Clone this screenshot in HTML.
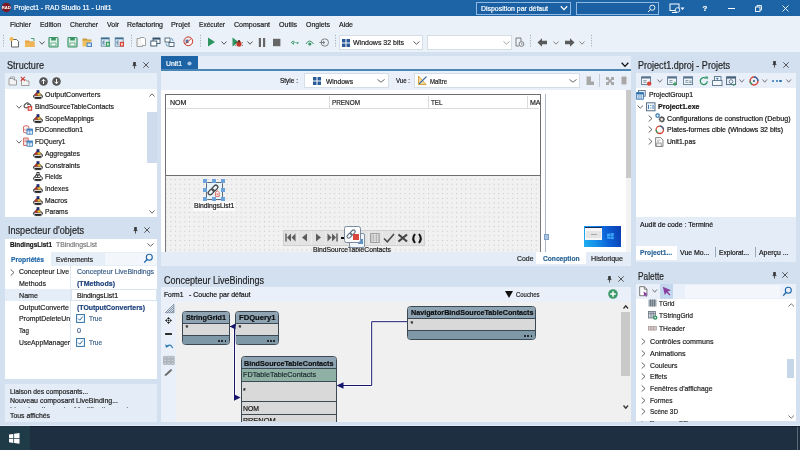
<!DOCTYPE html>
<html><head><meta charset="utf-8"><title>RAD Studio</title><style>
html,body{margin:0;padding:0;}
body{width:800px;height:450px;overflow:hidden;position:relative;background:#d3e0f0;font-family:"Liberation Sans",sans-serif;}
#root{position:absolute;left:0;top:0;width:800px;height:450px;overflow:hidden;will-change:transform;}
#root div,#root span.t,#root svg{position:absolute;}
#root span.t{white-space:nowrap;-webkit-text-stroke:0.2px currentColor;}
#root svg{overflow:visible;}
#root svg.flip{transform:scaleY(-1);}
#root svg.clip{overflow:hidden;}
</style></head><body><div id="root">
<div style="left:0px;top:0px;width:800px;height:16px;background:#1c64a6;"></div>
<svg style="left:1px;top:2.4px" width="11" height="11" viewBox="0 0 11 11"><circle cx="5.3" cy="5.5" r="4.7" fill="#7d1a22"/><text x="5.3" y="7.1" font-size="4.2" font-weight="bold" fill="#fff" text-anchor="middle" font-family="Liberation Sans">RAD</text></svg>
<span class="t" style="left:14px;top:2.00px;font-size:8px;line-height:12px;color:#fff;transform:scaleX(0.8511);transform-origin:0 50%;">Project1 - RAD Studio 11 - Unit1</span>
<div style="left:476px;top:2px;width:95px;height:12.5px;background:#1b60a2;border:1px solid #8fb9e2;box-sizing:border-box;"></div>
<span class="t" style="left:481px;top:3.00px;font-size:8px;line-height:12px;color:#fff;transform:scaleX(0.8659);transform-origin:0 50%;">Disposition par défaut</span>
<svg style="left:560px;top:5.3px" width="8" height="6" viewBox="0 0 8 6"><path d="M0.8 1.2 L4 4.6 L7.2 1.2" stroke="#fff" stroke-width="1.3" fill="none"/></svg>
<div style="left:576px;top:2px;width:83px;height:12.5px;background:#1b60a2;border:1px solid #8fb9e2;box-sizing:border-box;"></div>
<svg style="left:647px;top:4px" width="9" height="9" viewBox="0 0 9 9"><circle cx="5.3" cy="3.7" r="2.6" stroke="#fff" stroke-width="0.9" fill="none"/><path d="M3.4 5.6 L1 8" stroke="#fff" stroke-width="1"/></svg>
<svg style="left:669px;top:3px" width="16" height="11" viewBox="0 0 16 11"><rect x="1" y="1" width="9" height="6.5" fill="none" stroke="#fff" stroke-width="1"/><path d="M3 9.5h5" stroke="#fff"/><circle cx="8.5" cy="7" r="2.3" fill="#1c64a6" stroke="#fff" stroke-width="0.8"/><path d="M11.5 4.5h4l-2 2.5z" fill="#fff"/></svg>
<span class="t" style="left:702.5px;top:3.00px;font-size:8px;line-height:12px;color:#fff;font-weight:bold;">?</span>
<div style="left:728px;top:8px;width:7px;height:1px;background:#fff;"></div>
<svg style="left:754px;top:4px" width="9" height="9" viewBox="0 0 9 9"><rect x="1.5" y="3" width="4.5" height="4.5" fill="none" stroke="#fff" stroke-width="0.9"/><path d="M3 3V1.5h4.5V6H6" fill="none" stroke="#fff" stroke-width="0.9"/></svg>
<svg style="left:781px;top:4px" width="9" height="9" viewBox="0 0 9 9"><path d="M1.5 1.5 L7.5 7.5 M7.5 1.5 L1.5 7.5" stroke="#fff" stroke-width="0.9"/></svg>
<div style="left:0px;top:16px;width:800px;height:36px;background:#eaf1f9;"></div>
<span class="t" style="left:10px;top:19.00px;font-size:8px;line-height:12px;color:#1a1a1a;transform:scaleX(0.8749);transform-origin:0 50%;">Fichier</span>
<span class="t" style="left:40px;top:19.00px;font-size:8px;line-height:12px;color:#1a1a1a;transform:scaleX(0.8585);transform-origin:0 50%;">Edition</span>
<span class="t" style="left:70px;top:19.00px;font-size:8px;line-height:12px;color:#1a1a1a;transform:scaleX(0.8511);transform-origin:0 50%;">Chercher</span>
<span class="t" style="left:107px;top:19.00px;font-size:8px;line-height:12px;color:#1a1a1a;transform:scaleX(0.8705);transform-origin:0 50%;">Voir</span>
<span class="t" style="left:127px;top:19.00px;font-size:8px;line-height:12px;color:#1a1a1a;transform:scaleX(0.8800);transform-origin:0 50%;">Refactoring</span>
<span class="t" style="left:171px;top:19.00px;font-size:8px;line-height:12px;color:#1a1a1a;transform:scaleX(0.9092);transform-origin:0 50%;">Projet</span>
<span class="t" style="left:199px;top:19.00px;font-size:8px;line-height:12px;color:#1a1a1a;transform:scaleX(0.8236);transform-origin:0 50%;">Exécuter</span>
<span class="t" style="left:234px;top:19.00px;font-size:8px;line-height:12px;color:#1a1a1a;transform:scaleX(0.8800);transform-origin:0 50%;">Composant</span>
<span class="t" style="left:279px;top:19.00px;font-size:8px;line-height:12px;color:#1a1a1a;transform:scaleX(0.8802);transform-origin:0 50%;">Outils</span>
<span class="t" style="left:306px;top:19.00px;font-size:8px;line-height:12px;color:#1a1a1a;transform:scaleX(0.8706);transform-origin:0 50%;">Onglets</span>
<span class="t" style="left:339px;top:19.00px;font-size:8px;line-height:12px;color:#1a1a1a;transform:scaleX(0.8744);transform-origin:0 50%;">Aide</span>
<div style="left:0px;top:52px;width:800px;height:398px;background:#d3e0f0;"></div>
<svg style="left:3px;top:35px" width="1" height="13" viewBox="0 0 1 13"><rect x="0" y="0.0" width="1" height="1" fill="#9aa7b5"/><rect x="0" y="2.6" width="1" height="1" fill="#9aa7b5"/><rect x="0" y="5.2" width="1" height="1" fill="#9aa7b5"/><rect x="0" y="7.8" width="1" height="1" fill="#9aa7b5"/><rect x="0" y="10.4" width="1" height="1" fill="#9aa7b5"/></svg>
<svg style="left:9px;top:36px" width="11" height="12" viewBox="0 0 11 12"><path d="M2.5 3.5h5l2 2v5.5h-7z" fill="#fff" stroke="#555" stroke-width="0.9"/><circle cx="2.5" cy="3" r="2" fill="#f2b84b"/></svg>
<svg style="left:24px;top:36px" width="12" height="12" viewBox="0 0 12 12"><path d="M1 4.5h4l1 1h4.5v5.5h-9.5z" fill="#e5a440"/><path d="M1 6.5h9.5v4.5h-9.5z" fill="#f0b556"/><path d="M7 2.5h3v2.5" fill="none" stroke="#3b9a6a" stroke-width="0.9"/></svg>
<svg style="left:39px;top:41px" width="6" height="4" viewBox="0 0 6 4"><path d="M0.5 0.5 L3.0 3.2 L5.5 0.5" stroke="#444" stroke-width="0.9" fill="none"/></svg>
<svg style="left:48px;top:36px" width="11" height="12" viewBox="0 0 11 12"><rect x="1" y="1.5" width="9" height="9.5" rx="1" fill="#dff0e6" stroke="#3a9466" stroke-width="1.2"/><rect x="3.2" y="1.5" width="4.6" height="3" fill="#3a9466"/><rect x="3" y="7" width="5" height="3" fill="#fff" stroke="#3a9466" stroke-width="0.7"/></svg>
<svg style="left:67px;top:36px" width="11" height="12" viewBox="0 0 11 12"><rect x="1" y="1.5" width="9" height="9.5" rx="1" fill="#dff0e6" stroke="#3a9466" stroke-width="1.2"/><rect x="3.2" y="1.5" width="4.6" height="3" fill="#3a9466"/><rect x="3" y="7" width="5" height="3" fill="#fff" stroke="#3a9466" stroke-width="0.7"/></svg>
<svg style="left:82px;top:36px" width="11" height="12" viewBox="0 0 11 12"><path d="M0.5 2.5h4l1 1h4v2h-9z" fill="#c99a3a"/><rect x="0.5" y="4.5" width="8" height="6" fill="#f0c25e"/><rect x="4.5" y="6.5" width="5.5" height="4.5" fill="#4b86c4"/><rect x="5.6" y="7.6" width="3.3" height="2.3" fill="#dfeaf7"/></svg>
<svg style="left:100px;top:36px" width="11" height="12" viewBox="0 0 11 12"><rect x="1.2" y="1.8" width="8" height="8.4" fill="#e4ecf3" stroke="#5a86a6" stroke-width="0.8"/><rect x="1.2" y="1.8" width="8" height="1.5" fill="#3d6e8f"/><path d="M3 5h1.8M3 6.6h1.6M3 8.2h1.8M3 5v3.2" stroke="#3d6e8f" stroke-width="0.7" fill="none"/><rect x="5.8" y="5.8" width="4.2" height="4.8" fill="#3a9a60"/><rect x="7" y="7.2" width="1.8" height="2.2" fill="#d8f0e0"/></svg>
<svg style="left:114px;top:36px" width="11" height="12" viewBox="0 0 11 12"><rect x="1.2" y="1.8" width="8" height="8.4" fill="#e4ecf3" stroke="#5a86a6" stroke-width="0.8"/><rect x="1.2" y="1.8" width="8" height="1.5" fill="#3d6e8f"/><path d="M3 5h1.8M3 6.6h1.6M3 8.2h1.8M3 5v3.2" stroke="#3d6e8f" stroke-width="0.7" fill="none"/><rect x="5.8" y="5.8" width="4.2" height="4.8" fill="#d8453b"/><rect x="7" y="7.2" width="1.8" height="2.2" fill="#fbe0dc"/></svg>
<svg style="left:131px;top:35px" width="1" height="13" viewBox="0 0 1 13"><rect x="0" y="0.0" width="1" height="1" fill="#9aa7b5"/><rect x="0" y="2.6" width="1" height="1" fill="#9aa7b5"/><rect x="0" y="5.2" width="1" height="1" fill="#9aa7b5"/><rect x="0" y="7.8" width="1" height="1" fill="#9aa7b5"/><rect x="0" y="10.4" width="1" height="1" fill="#9aa7b5"/></svg>
<svg style="left:136px;top:36px" width="11" height="12" viewBox="0 0 11 12"><path d="M1 2.5h4l1.5 1.5v6.5h-5.5z" fill="#f4f4f4" stroke="#8a8a8a" stroke-width="0.8"/><path d="M4 1.5h4l1.5 1.5v6.5h-3" fill="#fff" stroke="#8a8a8a" stroke-width="0.8"/></svg>
<svg style="left:150px;top:36px" width="11" height="12" viewBox="0 0 11 12"><rect x="3" y="2" width="7" height="5.5" fill="#fff" stroke="#33506b" stroke-width="0.9"/><rect x="3" y="2" width="7" height="1.6" fill="#33506b"/><rect x="0.8" y="5" width="6" height="5" fill="#fff" stroke="#33506b" stroke-width="0.9"/></svg>
<svg style="left:164px;top:36px" width="11" height="12" viewBox="0 0 11 12"><rect x="1" y="2" width="5" height="4" fill="#fff" stroke="#33506b" stroke-width="0.8"/><rect x="5" y="6.5" width="5" height="4" fill="#fff" stroke="#33506b" stroke-width="0.8"/><path d="M7 2.5q2 0 2 2.5M4 10q-2 0-2-2.5" fill="none" stroke="#3b86b8" stroke-width="0.8"/></svg>
<svg style="left:182.5px;top:36px" width="11" height="12" viewBox="0 0 11 12"><circle cx="5.3" cy="5.3" r="4.4" fill="#f6ece9" stroke="#c8392f" stroke-width="1"/><rect x="2.6" y="3.6" width="5.4" height="3.4" fill="#fff"/><rect x="2.6" y="3.6" width="2.9" height="3.4" fill="#4a78a8"/><path d="M2.2 8 L8.4 2.6" stroke="#c8392f" stroke-width="0.9"/></svg>
<svg style="left:200px;top:35px" width="1" height="13" viewBox="0 0 1 13"><rect x="0" y="0.0" width="1" height="1" fill="#9aa7b5"/><rect x="0" y="2.6" width="1" height="1" fill="#9aa7b5"/><rect x="0" y="5.2" width="1" height="1" fill="#9aa7b5"/><rect x="0" y="7.8" width="1" height="1" fill="#9aa7b5"/><rect x="0" y="10.4" width="1" height="1" fill="#9aa7b5"/></svg>
<svg style="left:207px;top:37px" width="9" height="10" viewBox="0 0 9 10"><path d="M1 0.5 L8 5 L1 9.5z" fill="#2f9560"/></svg>
<svg style="left:221px;top:41px" width="6" height="4" viewBox="0 0 6 4"><path d="M0.5 0.5 L3.0 3.2 L5.5 0.5" stroke="#444" stroke-width="0.9" fill="none"/></svg>
<svg style="left:232px;top:37px" width="11" height="10" viewBox="0 0 11 10"><path d="M0.5 0.5 L6.5 5 L0.5 9.5z" fill="#2f9560"/><ellipse cx="7" cy="7" rx="2.6" ry="2.8" fill="#c2392b"/><circle cx="7" cy="4.2" r="1.2" fill="#5a2b20"/><path d="M4 6l-1-.8M4 8l-1 .8M10 6l1-.8M10 8l1 .8" stroke="#5a2b20" stroke-width="0.6"/></svg>
<svg style="left:247px;top:41px" width="6" height="4" viewBox="0 0 6 4"><path d="M0.5 0.5 L3.0 3.2 L5.5 0.5" stroke="#444" stroke-width="0.9" fill="none"/></svg>
<svg style="left:258px;top:38px" width="8" height="9" viewBox="0 0 8 9"><rect x="0.8" y="0" width="2.2" height="9" fill="#666"/><rect x="5" y="0" width="2.2" height="9" fill="#666"/></svg>
<svg style="left:273px;top:38px" width="8" height="9" viewBox="0 0 8 9"><rect x="0" y="0.8" width="7.4" height="7.4" fill="#666"/></svg>
<svg style="left:290px;top:38px" width="10" height="9" viewBox="0 0 10 9"><path d="M1 5q2.2-3.5 4.4 0" fill="none" stroke="#3a9466" stroke-width="1"/><circle cx="3.2" cy="5.5" r="1" fill="#3a9466"/><path d="M6 4.3h3l-1.5 2z" fill="#3a9466"/></svg>
<svg style="left:305px;top:38px" width="10" height="9" viewBox="0 0 10 9"><path d="M1 6q3.5-6 7.5 0" fill="none" stroke="#3a9466" stroke-width="1"/><circle cx="4.8" cy="6" r="1.6" fill="#3a9466"/></svg>
<svg style="left:319px;top:38px" width="10" height="9" viewBox="0 0 10 9"><circle cx="5.8" cy="4.5" r="3.7" fill="none" stroke="#666" stroke-width="0.8"/><path d="M0.5 4.5h5M4 3l1.8 1.5L4 6" fill="none" stroke="#666" stroke-width="0.8"/></svg>
<svg style="left:335px;top:35px" width="1" height="13" viewBox="0 0 1 13"><rect x="0" y="0.0" width="1" height="1" fill="#9aa7b5"/><rect x="0" y="2.6" width="1" height="1" fill="#9aa7b5"/><rect x="0" y="5.2" width="1" height="1" fill="#9aa7b5"/><rect x="0" y="7.8" width="1" height="1" fill="#9aa7b5"/><rect x="0" y="10.4" width="1" height="1" fill="#9aa7b5"/></svg>
<div style="left:339px;top:35px;width:84px;height:15px;background:#fff;border:1px solid #d5dde7;box-sizing:border-box;"></div>
<svg style="left:342px;top:38.5px" width="8" height="8" viewBox="0 0 8 8"><rect x="0" y="0" width="3.5" height="3.5" fill="#2b5c9a"/><rect x="4.5" y="0" width="3.5" height="3.5" fill="#2b5c9a"/><rect x="0" y="4.5" width="3.5" height="3.5" fill="#2b5c9a"/><rect x="4.5" y="4.5" width="3.5" height="3.5" fill="#2b5c9a"/></svg>
<span class="t" style="left:353px;top:37.00px;font-size:8px;line-height:12px;color:#1a1a1a;transform:scaleX(0.8756);transform-origin:0 50%;">Windows 32 bits</span>
<svg style="left:413px;top:41px" width="7" height="4" viewBox="0 0 7 4"><path d="M0.5 0.5 L3.5 3.2 L6.5 0.5" stroke="#444" stroke-width="0.9" fill="none"/></svg>
<div style="left:427px;top:35px;width:85px;height:15px;background:#fff;border:1px solid #d5dde7;box-sizing:border-box;"></div>
<svg style="left:503px;top:41px" width="7" height="4" viewBox="0 0 7 4"><path d="M0.5 0.5 L3.5 3.2 L6.5 0.5" stroke="#999" stroke-width="0.9" fill="none"/></svg>
<svg style="left:515px;top:37px" width="10" height="11" viewBox="0 0 10 11"><path d="M1 1h5v3.5M1 1v8h3" fill="none" stroke="#666" stroke-width="0.8"/><circle cx="6.5" cy="7" r="2.4" fill="none" stroke="#666" stroke-width="0.8"/><path d="M6.5 5.8v1.4h1.2" fill="none" stroke="#666" stroke-width="0.6"/></svg>
<svg style="left:530px;top:35px" width="1" height="13" viewBox="0 0 1 13"><rect x="0" y="0.0" width="1" height="1" fill="#9aa7b5"/><rect x="0" y="2.6" width="1" height="1" fill="#9aa7b5"/><rect x="0" y="5.2" width="1" height="1" fill="#9aa7b5"/><rect x="0" y="7.8" width="1" height="1" fill="#9aa7b5"/><rect x="0" y="10.4" width="1" height="1" fill="#9aa7b5"/></svg>
<svg style="left:537px;top:38px" width="11" height="9" viewBox="0 0 11 9"><path d="M0.5 4.5 L5 0.3 V2.7 H10 V6.3 H5 V8.7z" fill="#5a5a5a"/></svg>
<svg style="left:553px;top:41px" width="6" height="4" viewBox="0 0 6 4"><path d="M0.5 0.5 L3.0 3.2 L5.5 0.5" stroke="#777" stroke-width="0.9" fill="none"/></svg>
<svg style="left:564px;top:38px" width="11" height="9" viewBox="0 0 11 9"><path d="M10.5 4.5 L6 0.3 V2.7 H1 V6.3 H6 V8.7z" fill="#5a5a5a"/></svg>
<svg style="left:579px;top:41px" width="6" height="4" viewBox="0 0 6 4"><path d="M0.5 0.5 L3.0 3.2 L5.5 0.5" stroke="#777" stroke-width="0.9" fill="none"/></svg>
<svg style="left:591px;top:35px" width="1" height="13" viewBox="0 0 1 13"><rect x="0" y="0.0" width="1" height="1" fill="#9aa7b5"/><rect x="0" y="2.6" width="1" height="1" fill="#9aa7b5"/><rect x="0" y="5.2" width="1" height="1" fill="#9aa7b5"/><rect x="0" y="7.8" width="1" height="1" fill="#9aa7b5"/><rect x="0" y="10.4" width="1" height="1" fill="#9aa7b5"/></svg>
<span class="t" style="left:7px;top:58.00px;font-size:11px;line-height:15px;color:#1e1e1e;transform:scaleX(0.8291);transform-origin:0 50%;">Structure</span>
<svg style="left:132px;top:61.8px" width="5" height="7" viewBox="0 0 5 7"><path d="M1.2 0.5h2.6M0.5 3.6h4M2.5 3.6v3" stroke="#333" stroke-width="0.8" fill="none"/><rect x="1.2" y="0.5" width="2.6" height="3.1" fill="#333"/></svg>
<svg style="left:143px;top:62px" width="6" height="6" viewBox="0 0 6 6"><path d="M0.3 0.3 L5.7 5.7 M5.7 0.3 L0.3 5.7" stroke="#333" stroke-width="0.8"/></svg>
<div style="left:5px;top:73px;width:152px;height:16px;background:#e6eef8;"></div>
<svg style="left:8px;top:76px" width="10" height="10" viewBox="0 0 10 10"><path d="M1 2.5h4l1 1.5h2.5v5h-7.5z" fill="#f3f3f3" stroke="#8a8a8a" stroke-width="0.8"/><path d="M2.5 2.5v-1.5h4v3" fill="none" stroke="#8a8a8a" stroke-width="0.7"/></svg>
<svg style="left:20px;top:76px" width="10" height="10" viewBox="0 0 10 10"><path d="M1.5 3.5h4l1 1.5h2.5v4.5h-7.5z" fill="#f3f3f3" stroke="#8a8a8a" stroke-width="0.8"/><path d="M0.8 0.8l4 4M4.8 0.8l-4 4" stroke="#d03a2e" stroke-width="1.1"/></svg>
<svg style="left:39px;top:76.5px" width="9" height="9" viewBox="0 0 9 9"><circle cx="4.5" cy="4.5" r="4.3" fill="#555"/><path d="M4.5 7V2.5M2.5 4.3l2-2 2 2" stroke="#fff" stroke-width="1" fill="none"/></svg>
<svg style="left:52px;top:76.5px" width="9" height="9" viewBox="0 0 9 9"><circle cx="4.5" cy="4.5" r="4.3" fill="#555"/><path d="M4.5 2V6.5M2.5 4.7l2 2 2-2" stroke="#fff" stroke-width="1" fill="none"/></svg>
<div style="left:5px;top:89px;width:152px;height:127.6px;background:#fff;"></div>
<span class="t" style="left:45px;top:89.00px;font-size:8px;line-height:12px;color:#1a1a1a;transform:scaleX(0.8791);transform-origin:0 50%;">OutputConverters</span>
<svg style="left:32.5px;top:90.2px" width="10" height="9" viewBox="0 0 10 9"><path d="M0.7 5.6 L2.4 4.2 H7.6 L9.3 5.6 V7.4 L7.6 8.6 H2.4 L0.7 7.4z" fill="#fff" stroke="#1a1a1a" stroke-width="0.9"/><path d="M0.7 5.8 H9.3" stroke="#1a1a1a" stroke-width="0.6"/><path d="M2 7.6h6" stroke="#1a1a1a" stroke-width="1.1"/><path d="M1.8 5.4 L3.4 2.2 L5 5.4z" fill="#d42a20" stroke="#7a1510" stroke-width="0.4"/><circle cx="6" cy="4.2" r="1.5" fill="#f2c12e" stroke="#7a5a10" stroke-width="0.4"/><rect x="3.9" y="0.4" width="2.2" height="2.6" fill="#25308a" stroke="#101540" stroke-width="0.4"/></svg>
<span class="t" style="left:35px;top:101.00px;font-size:8px;line-height:12px;color:#1a1a1a;transform:scaleX(0.8582);transform-origin:0 50%;">BindSourceTableContacts</span>
<svg style="left:23px;top:101.4px" width="10" height="10" viewBox="0 0 10 10"><g fill="none" stroke="#555" stroke-width="1.2" stroke-linecap="round"><path d="M4.4 6.4a1.9 1.9 0 0 1-2.7 0a1.9 1.9 0 0 1 0-2.7l1.3-1.3a1.9 1.9 0 0 1 2.7 0"/><path d="M4.6 3.6a1.9 1.9 0 0 1 2.7 0a1.9 1.9 0 0 1 0 2.7"/></g><rect x="4.6" y="5" width="4.6" height="4.8" fill="#d8453b"/><rect x="5.8" y="6.4" width="2.2" height="2.2" fill="#fbe3e0"/></svg>
<svg style="left:16px;top:104.9px" width="6" height="4" viewBox="0 0 6 4"><path d="M0.5 0.5 L3.0 3.2 L5.5 0.5" stroke="#555" stroke-width="0.9" fill="none"/></svg>
<span class="t" style="left:45px;top:113.00px;font-size:8px;line-height:12px;color:#1a1a1a;transform:scaleX(0.8541);transform-origin:0 50%;">ScopeMappings</span>
<svg style="left:32.5px;top:113.6px" width="10" height="9" viewBox="0 0 10 9"><path d="M0.7 5.6 L2.4 4.2 H7.6 L9.3 5.6 V7.4 L7.6 8.6 H2.4 L0.7 7.4z" fill="#fff" stroke="#1a1a1a" stroke-width="0.9"/><path d="M0.7 5.8 H9.3" stroke="#1a1a1a" stroke-width="0.6"/><path d="M2 7.6h6" stroke="#1a1a1a" stroke-width="1.1"/><path d="M1.8 5.4 L3.4 2.2 L5 5.4z" fill="#d42a20" stroke="#7a1510" stroke-width="0.4"/><circle cx="6" cy="4.2" r="1.5" fill="#f2c12e" stroke="#7a5a10" stroke-width="0.4"/><rect x="3.9" y="0.4" width="2.2" height="2.6" fill="#25308a" stroke="#101540" stroke-width="0.4"/></svg>
<span class="t" style="left:35px;top:124.00px;font-size:8px;line-height:12px;color:#1a1a1a;transform:scaleX(0.8636);transform-origin:0 50%;">FDConnection1</span>
<svg style="left:23px;top:124.80000000000001px" width="10" height="10" viewBox="0 0 10 10"><ellipse cx="3.2" cy="2" rx="2.7" ry="1.3" fill="#fbeeee" stroke="#c9564c" stroke-width="0.8"/><path d="M0.5 2v5.2q2.7 1.8 5.4 0v-5.2" fill="#fbeeee" stroke="#c9564c" stroke-width="0.8"/><path d="M0.5 4.4q2.7 1.6 5.4 0" fill="none" stroke="#c9564c" stroke-width="0.6"/><rect x="4" y="4" width="5.4" height="5.2" fill="#eef5fc" stroke="#3d7fc0" stroke-width="0.9"/><path d="M4 5.8h5.4M6.7 5.8v3.4" stroke="#3d7fc0" stroke-width="0.7"/><rect x="4" y="4" width="5.4" height="1.4" fill="#3d7fc0"/></svg>
<span class="t" style="left:35px;top:136.00px;font-size:8px;line-height:12px;color:#1a1a1a;transform:scaleX(0.8266);transform-origin:0 50%;">FDQuery1</span>
<svg style="left:23px;top:136.5px" width="10" height="10" viewBox="0 0 10 10"><path d="M0.6 1h4.6v7.4h-4.6z" fill="#fbeeee" stroke="#c9564c" stroke-width="0.9"/><path d="M1.6 3h2.6M1.6 4.6h2.6" stroke="#c9564c" stroke-width="0.7"/><rect x="4" y="4" width="5.4" height="5.2" fill="#eef5fc" stroke="#3d7fc0" stroke-width="0.9"/><path d="M4 5.8h5.4M6.7 5.8v3.4" stroke="#3d7fc0" stroke-width="0.7"/><rect x="4" y="4" width="5.4" height="1.4" fill="#3d7fc0"/></svg>
<svg style="left:16px;top:140.0px" width="6" height="4" viewBox="0 0 6 4"><path d="M0.5 0.5 L3.0 3.2 L5.5 0.5" stroke="#555" stroke-width="0.9" fill="none"/></svg>
<span class="t" style="left:45px;top:148.00px;font-size:8px;line-height:12px;color:#1a1a1a;transform:scaleX(0.8554);transform-origin:0 50%;">Aggregates</span>
<svg style="left:32.5px;top:148.7px" width="10" height="9" viewBox="0 0 10 9"><path d="M0.7 5.6 L2.4 4.2 H7.6 L9.3 5.6 V7.4 L7.6 8.6 H2.4 L0.7 7.4z" fill="#fff" stroke="#1a1a1a" stroke-width="0.9"/><path d="M0.7 5.8 H9.3" stroke="#1a1a1a" stroke-width="0.6"/><path d="M2 7.6h6" stroke="#1a1a1a" stroke-width="1.1"/><path d="M1.8 5.4 L3.4 2.2 L5 5.4z" fill="#d42a20" stroke="#7a1510" stroke-width="0.4"/><circle cx="6" cy="4.2" r="1.5" fill="#f2c12e" stroke="#7a5a10" stroke-width="0.4"/><rect x="3.9" y="0.4" width="2.2" height="2.6" fill="#25308a" stroke="#101540" stroke-width="0.4"/></svg>
<span class="t" style="left:45px;top:160.00px;font-size:8px;line-height:12px;color:#1a1a1a;transform:scaleX(0.8651);transform-origin:0 50%;">Constraints</span>
<svg style="left:32.5px;top:160.5px" width="10" height="9" viewBox="0 0 10 9"><path d="M0.7 5.6 L2.4 4.2 H7.6 L9.3 5.6 V7.4 L7.6 8.6 H2.4 L0.7 7.4z" fill="#fff" stroke="#1a1a1a" stroke-width="0.9"/><path d="M0.7 5.8 H9.3" stroke="#1a1a1a" stroke-width="0.6"/><path d="M2 7.6h6" stroke="#1a1a1a" stroke-width="1.1"/><path d="M1.8 5.4 L3.4 2.2 L5 5.4z" fill="#d42a20" stroke="#7a1510" stroke-width="0.4"/><circle cx="6" cy="4.2" r="1.5" fill="#f2c12e" stroke="#7a5a10" stroke-width="0.4"/><rect x="3.9" y="0.4" width="2.2" height="2.6" fill="#25308a" stroke="#101540" stroke-width="0.4"/></svg>
<span class="t" style="left:45px;top:171.00px;font-size:8px;line-height:12px;color:#1a1a1a;transform:scaleX(0.7967);transform-origin:0 50%;">Fields</span>
<svg style="left:32.5px;top:172.2px" width="10" height="9" viewBox="0 0 10 9"><path d="M0.7 5.6 L2.4 4.2 H7.6 L9.3 5.6 V7.4 L7.6 8.6 H2.4 L0.7 7.4z" fill="#fff" stroke="#1a1a1a" stroke-width="0.9"/><path d="M2 7.6h6" stroke="#1a1a1a" stroke-width="1.1"/><path d="M1.8 5.4 L3.4 2.2 L5 5.4z" fill="#fff" stroke="#1a1a1a" stroke-width="0.8"/><circle cx="6" cy="4.2" r="1.5" fill="#fff" stroke="#1a1a1a" stroke-width="0.8"/><rect x="3.9" y="0.5" width="2.2" height="2.4" fill="#fff" stroke="#1a1a1a" stroke-width="0.8"/></svg>
<span class="t" style="left:45px;top:183.00px;font-size:8px;line-height:12px;color:#1a1a1a;transform:scaleX(0.8388);transform-origin:0 50%;">Indexes</span>
<svg style="left:32.5px;top:183.9px" width="10" height="9" viewBox="0 0 10 9"><path d="M0.7 5.6 L2.4 4.2 H7.6 L9.3 5.6 V7.4 L7.6 8.6 H2.4 L0.7 7.4z" fill="#fff" stroke="#1a1a1a" stroke-width="0.9"/><path d="M0.7 5.8 H9.3" stroke="#1a1a1a" stroke-width="0.6"/><path d="M2 7.6h6" stroke="#1a1a1a" stroke-width="1.1"/><path d="M1.8 5.4 L3.4 2.2 L5 5.4z" fill="#d42a20" stroke="#7a1510" stroke-width="0.4"/><circle cx="6" cy="4.2" r="1.5" fill="#f2c12e" stroke="#7a5a10" stroke-width="0.4"/><rect x="3.9" y="0.4" width="2.2" height="2.6" fill="#25308a" stroke="#101540" stroke-width="0.4"/></svg>
<span class="t" style="left:45px;top:195.00px;font-size:8px;line-height:12px;color:#1a1a1a;transform:scaleX(0.8580);transform-origin:0 50%;">Macros</span>
<svg style="left:32.5px;top:195.6px" width="10" height="9" viewBox="0 0 10 9"><path d="M0.7 5.6 L2.4 4.2 H7.6 L9.3 5.6 V7.4 L7.6 8.6 H2.4 L0.7 7.4z" fill="#fff" stroke="#1a1a1a" stroke-width="0.9"/><path d="M0.7 5.8 H9.3" stroke="#1a1a1a" stroke-width="0.6"/><path d="M2 7.6h6" stroke="#1a1a1a" stroke-width="1.1"/><path d="M1.8 5.4 L3.4 2.2 L5 5.4z" fill="#d42a20" stroke="#7a1510" stroke-width="0.4"/><circle cx="6" cy="4.2" r="1.5" fill="#f2c12e" stroke="#7a5a10" stroke-width="0.4"/><rect x="3.9" y="0.4" width="2.2" height="2.6" fill="#25308a" stroke="#101540" stroke-width="0.4"/></svg>
<span class="t" style="left:45px;top:206.00px;font-size:8px;line-height:12px;color:#1a1a1a;transform:scaleX(0.8345);transform-origin:0 50%;">Params</span>
<svg style="left:32.5px;top:207.3px" width="10" height="9" viewBox="0 0 10 9"><path d="M0.7 5.6 L2.4 4.2 H7.6 L9.3 5.6 V7.4 L7.6 8.6 H2.4 L0.7 7.4z" fill="#fff" stroke="#1a1a1a" stroke-width="0.9"/><path d="M0.7 5.8 H9.3" stroke="#1a1a1a" stroke-width="0.6"/><path d="M2 7.6h6" stroke="#1a1a1a" stroke-width="1.1"/><path d="M1.8 5.4 L3.4 2.2 L5 5.4z" fill="#d42a20" stroke="#7a1510" stroke-width="0.4"/><circle cx="6" cy="4.2" r="1.5" fill="#f2c12e" stroke="#7a5a10" stroke-width="0.4"/><rect x="3.9" y="0.4" width="2.2" height="2.6" fill="#25308a" stroke="#101540" stroke-width="0.4"/></svg>
<div style="left:146px;top:89px;width:11px;height:127.6px;background:#fff;"></div>
<div style="left:147px;top:112px;width:10px;height:51px;background:#cddbec;"></div>
<svg class="flip" style="left:148.5px;top:92.5px" width="6" height="4" viewBox="0 0 6 4"><path d="M0.5 0.5 L3.0 3.2 L5.5 0.5" stroke="#555" stroke-width="0.9" fill="none"/></svg>
<svg style="left:148.5px;top:209.5px" width="6" height="4" viewBox="0 0 6 4"><path d="M0.5 0.5 L3.0 3.2 L5.5 0.5" stroke="#555" stroke-width="0.9" fill="none"/></svg>
<span class="t" style="left:8px;top:223.00px;font-size:11px;line-height:15px;color:#1e1e1e;transform:scaleX(0.8262);transform-origin:0 50%;">Inspecteur d'objets</span>
<svg style="left:133px;top:226.8px" width="5" height="7" viewBox="0 0 5 7"><path d="M1.2 0.5h2.6M0.5 3.6h4M2.5 3.6v3" stroke="#333" stroke-width="0.8" fill="none"/><rect x="1.2" y="0.5" width="2.6" height="3.1" fill="#333"/></svg>
<svg style="left:144px;top:227px" width="6" height="6" viewBox="0 0 6 6"><path d="M0.3 0.3 L5.7 5.7 M5.7 0.3 L0.3 5.7" stroke="#333" stroke-width="0.8"/></svg>
<div style="left:5px;top:239px;width:152px;height:13px;background:#fff;"></div>
<span class="t" style="left:10px;top:239.00px;font-size:8px;line-height:12px;color:#111;font-weight:bold;transform:scaleX(0.7942);transform-origin:0 50%;">BindingsList1</span>
<span class="t" style="left:56px;top:239.00px;font-size:8px;line-height:12px;color:#777;transform:scaleX(0.8538);transform-origin:0 50%;">TBindingsList</span>
<svg style="left:147px;top:243px" width="7" height="4" viewBox="0 0 7 4"><path d="M0.5 0.5 L3.5 3.2 L6.5 0.5" stroke="#555" stroke-width="0.9" fill="none"/></svg>
<div style="left:5px;top:252px;width:152px;height:14px;background:#e6eef8;"></div>
<div style="left:5px;top:252px;width:46px;height:14px;background:#fff;"></div>
<span class="t" style="left:11px;top:254.00px;font-size:8px;line-height:12px;color:#1c64a6;font-weight:bold;transform:scaleX(0.8340);transform-origin:0 50%;">Propriétés</span>
<span class="t" style="left:56px;top:254.00px;font-size:8px;line-height:12px;color:#222;transform:scaleX(0.8321);transform-origin:0 50%;">Evénements</span>
<div style="left:105px;top:253px;width:52px;height:12px;background:#f3f7fc;"></div>
<svg style="left:143px;top:253px" width="11" height="11" viewBox="0 0 11 11"><circle cx="6.3" cy="4.2" r="3" stroke="#1c64a6" stroke-width="1.1" fill="none"/><path d="M4 6.5 L1.2 9.6" stroke="#1c64a6" stroke-width="1.3"/></svg>
<div style="left:5px;top:266px;width:152px;height:113px;background:#fff;"></div>
<div style="left:5px;top:289px;width:65px;height:12px;background:#e4edf8;"></div>
<div style="left:70px;top:266px;width:1px;height:84px;background:#e1e8f1;"></div>
<div style="left:71px;top:289px;width:86px;height:12px;background:#fff;border:1px solid #d9e4f1;box-sizing:border-box;"></div>
<svg style="left:10px;top:268.5px" width="5" height="7" viewBox="0 0 5 7"><path d="M0.7 0.5 L4 3.5 L0.7 6.5" stroke="#555" stroke-width="0.9" fill="none"/></svg>
<span class="t" style="left:19px;top:266.00px;font-size:8px;line-height:12px;color:#222;transform:scaleX(0.8583);transform-origin:0 50%;">Concepteur Live</span>
<span class="t" style="left:76.5px;top:266.00px;font-size:8px;line-height:12px;color:#3a5f8a;transform:scaleX(0.8658);transform-origin:0 50%;">Concepteur LiveBindings</span>
<span class="t" style="left:19px;top:278.00px;font-size:8px;line-height:12px;color:#222;transform:scaleX(0.8800);transform-origin:0 50%;">Methods</span>
<span class="t" style="left:76.5px;top:278.00px;font-size:8px;line-height:12px;color:#1a3f7a;font-weight:bold;transform:scaleX(0.8817);transform-origin:0 50%;">(TMethods)</span>
<span class="t" style="left:19px;top:290.00px;font-size:8px;line-height:12px;color:#222;transform:scaleX(0.8904);transform-origin:0 50%;">Name</span>
<span class="t" style="left:76.5px;top:290.00px;font-size:8px;line-height:12px;color:#111;transform:scaleX(0.8616);transform-origin:0 50%;">BindingsList1</span>
<span class="t" style="left:19px;top:302.00px;font-size:8px;line-height:12px;color:#222;transform:scaleX(0.8854);transform-origin:0 50%;">OutputConverte</span>
<span class="t" style="left:76.5px;top:302.00px;font-size:8px;line-height:12px;color:#1a3f7a;font-weight:bold;transform:scaleX(0.8661);transform-origin:0 50%;">(TOutputConverters)</span>
<span class="t" style="left:19px;top:313.00px;font-size:8px;line-height:12px;color:#222;transform:scaleX(0.8625);transform-origin:0 50%;">PromptDeleteUn</span>
<svg style="left:76px;top:314.1px" width="9" height="9" viewBox="0 0 9 9"><rect x="0.6" y="0.6" width="7.8" height="7.8" fill="#fff" stroke="#2d6fa8" stroke-width="1"/><path d="M2.2 4.5 L3.8 6.2 L6.8 2.6" stroke="#2d6fa8" stroke-width="1" fill="none"/></svg>
<span class="t" style="left:88.5px;top:313.00px;font-size:8px;line-height:12px;color:#3a5f8a;transform:scaleX(0.8049);transform-origin:0 50%;">True</span>
<span class="t" style="left:19px;top:325.00px;font-size:8px;line-height:12px;color:#222;transform:scaleX(0.7753);transform-origin:0 50%;">Tag</span>
<span class="t" style="left:76.5px;top:325.00px;font-size:8px;line-height:12px;color:#3a5f8a;transform:scaleX(0.8991);transform-origin:0 50%;">0</span>
<span class="t" style="left:19px;top:337.00px;font-size:8px;line-height:12px;color:#222;transform:scaleX(0.8496);transform-origin:0 50%;">UseAppManager</span>
<svg style="left:76px;top:337.5px" width="9" height="9" viewBox="0 0 9 9"><rect x="0.6" y="0.6" width="7.8" height="7.8" fill="#fff" stroke="#2d6fa8" stroke-width="1"/><path d="M2.2 4.5 L3.8 6.2 L6.8 2.6" stroke="#2d6fa8" stroke-width="1" fill="none"/></svg>
<span class="t" style="left:88.5px;top:337.00px;font-size:8px;line-height:12px;color:#3a5f8a;transform:scaleX(0.8049);transform-origin:0 50%;">True</span>
<div style="left:5px;top:384px;width:152px;height:37.7px;background:#e3ecf7;"></div>
<span class="t" style="left:10px;top:386.00px;font-size:8px;line-height:12px;color:#1a1a1a;transform:scaleX(0.8433);transform-origin:0 50%;">Liaison des composants...</span>
<span class="t" style="left:10px;top:395.00px;font-size:8px;line-height:12px;color:#1a1a1a;transform:scaleX(0.8736);transform-origin:0 50%;">Nouveau composant LiveBinding...</span>
<div style="left:10px;top:405px;width:120px;height:3px;overflow:hidden;"><span class="t" style="left:0;top:0px;font-size:8px;line-height:10px;color:#555;transform:scaleX(0.93);transform-origin:0 0;">Lier visuellement... Modification rapide</span></div>
<span class="t" style="left:10px;top:410.00px;font-size:8px;line-height:12px;color:#1a1a1a;transform:scaleX(0.8594);transform-origin:0 50%;">Tous affichés</span>
<div style="left:161px;top:56px;width:470px;height:14px;background:#e3ecf7;"></div>
<div style="left:161px;top:56px;width:37px;height:14px;background:#1c64a6;"></div>
<span class="t" style="left:166px;top:58.00px;font-size:8px;line-height:12px;color:#fff;transform:scaleX(0.8568);transform-origin:0 50%;">Unit1</span>
<svg style="left:187px;top:61px" width="5" height="5" viewBox="0 0 5 5"><circle cx="2.5" cy="2.5" r="2.1" fill="#a9c6e6"/></svg>
<div style="left:161px;top:69.4px;width:470px;height:1.2px;background:#4a86b6;"></div>
<svg style="left:621px;top:61.5px" width="8" height="6" viewBox="0 0 8 6"><path d="M0.7 0.8 L4 4.4 L7.3 0.8" stroke="#111" stroke-width="1.3" fill="none"/></svg>
<div style="left:161px;top:71px;width:470px;height:19px;background:#e9f0f9;"></div>
<span class="t" style="left:280px;top:75.00px;font-size:8px;line-height:12px;color:#111;transform:scaleX(0.8097);transform-origin:0 50%;">Style :</span>
<div style="left:304px;top:73px;width:85px;height:15px;background:#fff;border:1px solid #d5dde7;box-sizing:border-box;"></div>
<svg style="left:313px;top:76.5px" width="8" height="8" viewBox="0 0 8 8"><rect x="0" y="0" width="3.5" height="3.5" fill="#2b5c9a"/><rect x="4.5" y="0" width="3.5" height="3.5" fill="#2b5c9a"/><rect x="0" y="4.5" width="3.5" height="3.5" fill="#2b5c9a"/><rect x="4.5" y="4.5" width="3.5" height="3.5" fill="#2b5c9a"/></svg>
<span class="t" style="left:326px;top:76.00px;font-size:7.5px;line-height:11.5px;color:#1a1a1a;transform:scaleX(0.8875);transform-origin:0 50%;">Windows</span>
<svg style="left:377px;top:79px" width="8" height="4" viewBox="0 0 8 4"><path d="M0.5 0.5 L4.0 3.2 L7.5 0.5" stroke="#555" stroke-width="0.9" fill="none"/></svg>
<span class="t" style="left:396px;top:75.00px;font-size:8px;line-height:12px;color:#111;transform:scaleX(0.7616);transform-origin:0 50%;">Vue :</span>
<div style="left:414px;top:73px;width:166px;height:15px;background:#fff;border:1px solid #d5dde7;box-sizing:border-box;"></div>
<svg style="left:417px;top:75px" width="11" height="11" viewBox="0 0 11 11"><path d="M1.5 9.5 L9 9.5 L1.5 1z" fill="#f7dca0" stroke="#d99a2b" stroke-width="0.9"/><path d="M2 9 L9.5 1.5" stroke="#3a6ea5" stroke-width="1.1"/></svg>
<span class="t" style="left:430px;top:76.00px;font-size:7.5px;line-height:11.5px;color:#1a1a1a;transform:scaleX(0.7999);transform-origin:0 50%;">Maître</span>
<svg style="left:569px;top:79px" width="8" height="4" viewBox="0 0 8 4"><path d="M0.5 0.5 L4.0 3.2 L7.5 0.5" stroke="#555" stroke-width="0.9" fill="none"/></svg>
<svg style="left:586px;top:75.5px" width="9" height="9" viewBox="0 0 9 9"><path d="M0.5 0.5h4.5v5h3v3.5h-7.5z" fill="#a8a8a8"/></svg>
<div style="left:599px;top:74px;width:1px;height:13px;background:#c3ccd6;"></div>
<svg style="left:605px;top:75.5px" width="10" height="9" viewBox="0 0 10 9"><path d="M1 1h3v1.5a1 1 0 0 0 2 0V1h3v3h-1.5a1 1 0 0 0 0 2H9v3h-3v-1.5a1 1 0 0 0-2 0V9H1v-3h1.5a1 1 0 0 0 0-2H1z" fill="#a8a8a8"/></svg>
<svg style="left:621px;top:75.5px" width="6" height="9" viewBox="0 0 6 9"><rect x="0.5" y="0.5" width="5" height="8" rx="0.8" fill="#a8a8a8"/></svg>
<div style="left:161px;top:90px;width:470px;height:162px;background:#fff;"></div>
<div style="left:626px;top:90px;width:5px;height:162px;background:#f3f3f3;"></div>
<div style="left:626px;top:90px;width:5px;height:88px;background:#c9c9c9;"></div>
<div style="left:165px;top:175px;width:375px;height:77px;background:#f1f1f1;"></div>
<svg class="clip" style="left:165px;top:175px" width="375" height="77" viewBox="0 0 375 77"><defs><pattern id="dp" x="0.610" y="4.100" width="4.685" height="4.685" patternUnits="userSpaceOnUse"><rect x="0" y="0" width="1" height="1" fill="#c4c4c4"/></pattern></defs><rect x="0" y="0" width="375" height="77" fill="url(#dp)"/></svg>
<div style="left:164.5px;top:94px;width:1.5px;height:158px;background:#7a7a7a;"></div>
<div style="left:539.5px;top:94px;width:1.5px;height:158px;background:#7a7a7a;"></div>
<div style="left:165px;top:94px;width:376px;height:81.5px;background:#fff;border:1.6px solid #6e6e6e;box-sizing:border-box;"></div>
<div style="left:167px;top:108px;width:372px;height:1px;background:#dcdcdc;"></div>
<div style="left:329px;top:96px;width:1px;height:12px;background:#dcdcdc;"></div>
<div style="left:428px;top:96px;width:1px;height:12px;background:#dcdcdc;"></div>
<div style="left:527px;top:96px;width:1px;height:12px;background:#dcdcdc;"></div>
<span class="t" style="left:169.5px;top:97.00px;font-size:8px;line-height:12px;color:#222;transform:scaleX(0.8841);transform-origin:0 50%;">NOM</span>
<span class="t" style="left:332px;top:97.00px;font-size:8px;line-height:12px;color:#222;transform:scaleX(0.7974);transform-origin:0 50%;">PRENOM</span>
<span class="t" style="left:431px;top:97.00px;font-size:8px;line-height:12px;color:#222;transform:scaleX(0.7838);transform-origin:0 50%;">TEL</span>
<div style="left:529.5px;top:96px;width:10px;height:12px;overflow:hidden;"><span class="t" style="left:0;top:1px;font-size:8px;line-height:12px;color:#222;transform:scaleX(0.88);transform-origin:0 50%;">MAIL</span></div>
<div style="left:545px;top:94px;width:1.3px;height:158px;background:#a9b7c8;"></div>
<div style="left:543.5px;top:234px;width:5px;height:5.5px;background:#a9c3e0;border:1px solid #7da0c6;box-sizing:border-box;"></div>
<div style="left:584px;top:226px;width:37px;height:21px;background:linear-gradient(75deg,#1fb0f2 0%,#1590e8 30%,#0d62d8 60%,#0a3cae 100%);"></div>
<div style="left:584.7px;top:227px;width:17.3px;height:13.4px;background:#f6f6f6;"></div>
<div style="left:584.7px;top:226.6px;width:17.3px;height:1.2px;background:#1a2a5a;"></div>
<div style="left:586px;top:231px;width:14.6px;height:7px;background:#e4e4e4;"></div>
<div style="left:590.5px;top:234px;width:6px;height:1px;background:#aaa;"></div>
<svg style="left:607px;top:233.3px" width="6.7" height="6.2" viewBox="0 0 6.7 6.2"><path d="M0 0.8 L3 0.4 V2.9 H0z M3.5 0.35 L6.7 0 V2.9 H3.5z M0 3.4 H3 V5.9 L0 5.5z M3.5 3.4 H6.7 V6.2 L3.5 5.9z" fill="#3aa6f5"/></svg>
<div style="left:205.5px;top:181.5px;width:17.5px;height:18px;background:#e8f4fb;border:1px solid #5f6a75;box-sizing:border-box;border-radius:1.5px;"></div>
<svg style="left:207px;top:183.6px" width="12.0" height="12.0" viewBox="0 0 12 12"><g fill="none" stroke="#4a4a4a" stroke-width="1.3"><rect x="0.8" y="5.9" width="6.6" height="4" rx="2" transform="rotate(-45 4.1 7.9)"/><rect x="4.6" y="2.1" width="6.6" height="4" rx="2" transform="rotate(-45 7.9 4.1)"/></g></svg>
<svg style="left:215px;top:189.5px" width="5" height="7" viewBox="0 0 5 7"><path d="M0.6 2.6 L2.4 0.6 L4.2 2.6 V6.4 H0.6z" fill="#fff" stroke="#d8453b" stroke-width="0.8"/><rect x="1.6" y="3.2" width="1.6" height="2" fill="#e98d85"/></svg>
<div style="left:203.2px;top:179.1px;width:3.9px;height:3.9px;background:#6aa3de;"></div>
<div style="left:203.2px;top:188.2px;width:3.9px;height:3.9px;background:#6aa3de;"></div>
<div style="left:203.2px;top:197.3px;width:3.9px;height:3.9px;background:#6aa3de;"></div>
<div style="left:212.1px;top:179.1px;width:3.9px;height:3.9px;background:#6aa3de;"></div>
<div style="left:212.1px;top:197.3px;width:3.9px;height:3.9px;background:#6aa3de;"></div>
<div style="left:220.8px;top:179.1px;width:3.9px;height:3.9px;background:#6aa3de;"></div>
<div style="left:220.8px;top:188.2px;width:3.9px;height:3.9px;background:#6aa3de;"></div>
<div style="left:220.8px;top:197.3px;width:3.9px;height:3.9px;background:#6aa3de;"></div>
<div style="left:193px;top:201px;width:42px;height:9.5px;background:#fff;opacity:0.7;"></div>
<span class="t" style="left:193.7px;top:200.00px;font-size:8px;line-height:12px;color:#111;transform:scaleX(0.8469);transform-origin:0 50%;">BindingsList1</span>
<div style="left:283px;top:230px;width:141.5px;height:15.5px;background:#e3e3e3;border:1px solid #d0d0d0;box-sizing:border-box;"></div>
<div style="left:297.1px;top:231px;width:1px;height:13.5px;background:#ececec;"></div>
<div style="left:311.2px;top:231px;width:1px;height:13.5px;background:#ececec;"></div>
<div style="left:325.3px;top:231px;width:1px;height:13.5px;background:#ececec;"></div>
<div style="left:339.4px;top:231px;width:1px;height:13.5px;background:#ececec;"></div>
<div style="left:353.5px;top:231px;width:1px;height:13.5px;background:#ececec;"></div>
<div style="left:367.6px;top:231px;width:1px;height:13.5px;background:#ececec;"></div>
<div style="left:381.7px;top:231px;width:1px;height:13.5px;background:#ececec;"></div>
<div style="left:395.8px;top:231px;width:1px;height:13.5px;background:#ececec;"></div>
<div style="left:409.9px;top:231px;width:1px;height:13.5px;background:#ececec;"></div>
<svg style="left:285px;top:233px" width="11" height="9" viewBox="0 0 11 9"><rect x="0.3" y="0.5" width="1.4" height="8" fill="#5c5c5c"/><path d="M6 0.5 L2 4.5 L6 8.5z M10.5 0.5 L6.5 4.5 L10.5 8.5z" fill="#5c5c5c"/></svg>
<svg style="left:300.5px;top:233px" width="7" height="9" viewBox="0 0 7 9"><path d="M6 0.5 L1 4.5 L6 8.5z" fill="#5c5c5c"/></svg>
<svg style="left:315px;top:233px" width="7" height="9" viewBox="0 0 7 9"><path d="M1 0.5 L6 4.5 L1 8.5z" fill="#5c5c5c"/></svg>
<svg style="left:327px;top:233px" width="11" height="9" viewBox="0 0 11 9"><rect x="9.3" y="0.5" width="1.4" height="8" fill="#5c5c5c"/><path d="M0.5 0.5 L4.5 4.5 L0.5 8.5z M5 0.5 L9 4.5 L5 8.5z" fill="#5c5c5c"/></svg>
<div style="left:341px;top:237px;width:3px;height:1.6px;background:#111;"></div>
<svg style="left:370px;top:233px" width="10" height="10" viewBox="0 0 10 10"><rect x="0.7" y="0.7" width="8.4" height="8.6" fill="#f2f2f2" stroke="#8a8a8a" stroke-width="0.9"/><path d="M3.2 0.7v8.6M6.4 0.7v8.6M0.7 3h8.4M0.7 5h8.4M0.7 7h8.4" stroke="#9a9a9a" stroke-width="0.6"/></svg>
<svg style="left:383px;top:233px" width="12" height="10" viewBox="0 0 12 10"><path d="M1 5.5 L4.3 8.8 L11 1" stroke="#4a4a4a" stroke-width="1.5" fill="none"/></svg>
<svg style="left:397px;top:233px" width="12" height="10" viewBox="0 0 12 10"><path d="M1.5 1.5 L10 8.5 M10 1.5 L1.5 8.5" stroke="#444" stroke-width="2.2" fill="none"/></svg>
<svg style="left:411px;top:232.5px" width="12" height="11" viewBox="0 0 12 11"><path d="M4 1 Q0.5 5.5 4 10" stroke="#111" stroke-width="2" fill="none"/><path d="M8 1 Q11.5 5.5 8 10" stroke="#111" stroke-width="2" fill="none"/></svg>
<span class="t" style="left:312.5px;top:244.00px;font-size:8px;line-height:12px;color:#111;transform:scaleX(0.8474);transform-origin:0 50%;text-shadow:0 0 1px #fff;">BindSourceTableContacts</span>
<div style="left:349px;top:233px;width:15.5px;height:14.5px;background:#f2f6fa;border:1px solid #8193a5;box-sizing:border-box;border-radius:2px;"></div>
<div style="left:357.5px;top:238.5px;width:5px;height:5.5px;background:#5b93c8;"></div>
<div style="left:344px;top:226px;width:16.5px;height:16.5px;background:#fbfcfd;border:1px solid #7c8c9c;box-sizing:border-box;border-radius:2.5px;"></div>
<svg style="left:345.5px;top:228.5px" width="10.2" height="10.2" viewBox="0 0 12 12"><g fill="none" stroke="#5f6f7f" stroke-width="1.3"><rect x="0.8" y="5.9" width="6.6" height="4" rx="2" transform="rotate(-45 4.1 7.9)"/><rect x="4.6" y="2.1" width="6.6" height="4" rx="2" transform="rotate(-45 7.9 4.1)"/></g></svg>
<div style="left:353px;top:234px;width:6px;height:6px;background:#d9483c;"></div>
<div style="left:161px;top:252px;width:470px;height:13.6px;background:#e3ecf7;"></div>
<div style="left:536px;top:252px;width:50px;height:12px;background:#fff;"></div>
<span class="t" style="left:516.5px;top:253.00px;font-size:8px;line-height:12px;color:#222;transform:scaleX(0.8628);transform-origin:0 50%;">Code</span>
<span class="t" style="left:543px;top:253.00px;font-size:8px;line-height:12px;color:#2a6496;font-weight:bold;transform:scaleX(0.8297);transform-origin:0 50%;">Conception</span>
<span class="t" style="left:590.5px;top:253.00px;font-size:8px;line-height:12px;color:#222;transform:scaleX(0.8885);transform-origin:0 50%;">Historique</span>
<span class="t" style="left:164px;top:273.00px;font-size:11px;line-height:15px;color:#1e1e1e;transform:scaleX(0.8177);transform-origin:0 50%;">Concepteur LiveBindings</span>
<svg style="left:606.8px;top:275.8px" width="5" height="7" viewBox="0 0 5 7"><path d="M1.2 0.5h2.6M0.5 3.6h4M2.5 3.6v3" stroke="#333" stroke-width="0.8" fill="none"/><rect x="1.2" y="0.5" width="2.6" height="3.1" fill="#333"/></svg>
<svg style="left:618px;top:276px" width="6" height="6" viewBox="0 0 6 6"><path d="M0.3 0.3 L5.7 5.7 M5.7 0.3 L0.3 5.7" stroke="#333" stroke-width="0.8"/></svg>
<div style="left:161px;top:287px;width:470px;height:15px;background:#e9f0f9;"></div>
<span class="t" style="left:164px;top:289.00px;font-size:8px;line-height:12px;color:#111;transform:scaleX(0.8437);transform-origin:0 50%;">Form1</span>
<span class="t" style="left:189px;top:289.00px;font-size:8px;line-height:12px;color:#111;transform:scaleX(0.8698);transform-origin:0 50%;">- Couche par défaut</span>
<svg style="left:505px;top:290.5px" width="8" height="7" viewBox="0 0 8 7"><path d="M0 0 H8 L4 7z" fill="#111"/></svg>
<span class="t" style="left:516px;top:289.00px;font-size:8px;line-height:12px;color:#222;transform:scaleX(0.7443);transform-origin:0 50%;">Couches</span>
<svg style="left:608px;top:289px" width="10" height="10" viewBox="0 0 10 10"><circle cx="5" cy="5" r="4.8" fill="#3a9a6a"/><path d="M5 2.2v5.6M2.2 5h5.6" stroke="#fff" stroke-width="1.5"/></svg>
<div style="left:161px;top:302px;width:15px;height:119.7px;background:#e9f0f9;"></div>
<svg style="left:165px;top:304px" width="9.5" height="9" viewBox="0 0 9.5 9"><path d="M0.3 8.7 L9 0.3 M2.2 8.7 L9 2.2 M4.2 8.7 L9 4.2 M6.2 8.7 L9 6.2 M7.8 8.7 L9 7.6" stroke="#54687f" stroke-width="0.75" fill="none"/><path d="M0.3 8.7 H9 V0.3" stroke="#54687f" stroke-width="0.5" fill="none"/></svg>
<svg style="left:165px;top:317.2px" width="7" height="7" viewBox="0 0 7 7"><path d="M3.5 0 L5.1 1.9 H1.9z M3.5 7 L5.1 5.1 H1.9z M0 3.5 L1.9 1.9 V5.1z M7 3.5 L5.1 1.9 V5.1z" fill="#1a1a1a"/><rect x="2.6" y="2.6" width="1.8" height="1.8" fill="#1a1a1a"/></svg>
<div style="left:165.3px;top:332.6px;width:7px;height:2px;background:#2e2e2e;border-radius:0.6px;"></div>
<svg style="left:165px;top:343px" width="8.5" height="6" viewBox="0 0 8.5 6"><path d="M2.2 3 Q6.2 0.6 7.6 5.2" fill="none" stroke="#2a7ab8" stroke-width="1.2"/><path d="M0.2 1.2 L0.9 4.8 L4 3.4z" fill="#2a7ab8"/></svg>
<svg style="left:163px;top:355.8px" width="11.8" height="8.8" viewBox="0 0 11.8 8.8"><g fill="#c9ced4" stroke="#8a929b" stroke-width="0.55"><rect x="0.4" y="0.4" width="3.3" height="2.4" rx="0.5"/><rect x="4.2" y="0.4" width="3.3" height="2.4" rx="0.5"/><rect x="8" y="0.4" width="3.3" height="2.4" rx="0.5"/><rect x="0.4" y="3.2" width="3.3" height="2.4" rx="0.5"/><rect x="4.2" y="3.2" width="3.3" height="2.4" rx="0.5"/><rect x="8" y="3.2" width="3.3" height="2.4" rx="0.5"/><rect x="0.4" y="6" width="3.3" height="2.4" rx="0.5"/><rect x="4.2" y="6" width="3.3" height="2.4" rx="0.5"/><rect x="8" y="6" width="3.3" height="2.4" rx="0.5"/></g></svg>
<svg style="left:164.4px;top:368px" width="9.2" height="8.6" viewBox="0 0 9.2 8.6"><path d="M0.6 8 L1.2 6.2 L7 0.8 L8.4 2.2 L2.6 7.6z" fill="#6a6a6a"/><path d="M6.4 1.4 L7.8 2.8" stroke="#bdbdbd" stroke-width="0.7"/></svg>
<div style="left:176px;top:302px;width:455px;height:119.7px;background:#f0f0f0;"></div>
<div style="left:182px;top:311px;width:48px;height:34.0px;box-sizing:border-box;border:1px solid #3b4954;border-radius:3.5px;overflow:hidden;background:#d9d9d9;"><div style="left:0;top:0;width:48px;height:10.5px;background:#8ea4b3;border-bottom:1px solid #3b4954;"></div><div style="left:0;top:22.5px;width:48px;height:10px;background:#7f98a8;border-top:1px solid #3b4954;"></div></div>
<span class="t" style="left:185.5px;top:312.00px;font-size:8px;line-height:12px;color:#0c0c0c;font-weight:bold;transform:scaleX(0.9090);transform-origin:0 50%;">StringGrid1</span>
<span class="t" style="left:185.5px;top:322.00px;font-size:7px;line-height:11px;color:#111;">*</span>
<div style="left:218.2px;top:339.8px;width:1.9px;height:1.9px;background:#0a0a0a;border-radius:1px;"></div>
<div style="left:221.39999999999998px;top:339.8px;width:1.9px;height:1.9px;background:#0a0a0a;border-radius:1px;"></div>
<div style="left:224.6px;top:339.8px;width:1.9px;height:1.9px;background:#0a0a0a;border-radius:1px;"></div>
<div style="left:235px;top:311px;width:43.5px;height:34.0px;box-sizing:border-box;border:1px solid #3b4954;border-radius:3.5px;overflow:hidden;background:#d9d9d9;"><div style="left:0;top:0;width:43.5px;height:10.5px;background:#8ea4b3;border-bottom:1px solid #3b4954;"></div><div style="left:0;top:22.5px;width:43.5px;height:10px;background:#7f98a8;border-top:1px solid #3b4954;"></div></div>
<span class="t" style="left:238.5px;top:312.00px;font-size:8px;line-height:12px;color:#0c0c0c;font-weight:bold;transform:scaleX(0.9547);transform-origin:0 50%;">FDQuery1</span>
<span class="t" style="left:238.5px;top:322.00px;font-size:7px;line-height:11px;color:#111;">*</span>
<div style="left:266.7px;top:339.8px;width:1.9px;height:1.9px;background:#0a0a0a;border-radius:1px;"></div>
<div style="left:269.9px;top:339.8px;width:1.9px;height:1.9px;background:#0a0a0a;border-radius:1px;"></div>
<div style="left:273.09999999999997px;top:339.8px;width:1.9px;height:1.9px;background:#0a0a0a;border-radius:1px;"></div>
<div style="left:407px;top:306px;width:129px;height:34.0px;box-sizing:border-box;border:1px solid #3b4954;border-radius:3.5px;overflow:hidden;background:#d9d9d9;"><div style="left:0;top:0;width:129px;height:11px;background:#8ea4b3;border-bottom:1px solid #3b4954;"></div><div style="left:0;top:23.0px;width:129px;height:9.5px;background:#7f98a8;border-top:1px solid #3b4954;"></div></div>
<span class="t" style="left:410.5px;top:307.00px;font-size:8px;line-height:12px;color:#0c0c0c;font-weight:bold;transform:scaleX(0.8987);transform-origin:0 50%;">NavigatorBindSourceTableContacts</span>
<span class="t" style="left:410.5px;top:318.00px;font-size:7px;line-height:11px;color:#111;">*</span>
<div style="left:524.2px;top:334.8px;width:1.9px;height:1.9px;background:#0a0a0a;border-radius:1px;"></div>
<div style="left:527.4000000000001px;top:334.8px;width:1.9px;height:1.9px;background:#0a0a0a;border-radius:1px;"></div>
<div style="left:530.6px;top:334.8px;width:1.9px;height:1.9px;background:#0a0a0a;border-radius:1px;"></div>
<div style="left:240.5px;top:355.8px;width:96px;height:65.9px;overflow:hidden;"><div style="left:0;top:0;width:96px;height:80px;box-sizing:border-box;border:1px solid #3b4954;border-radius:3.5px;overflow:hidden;background:#d9d9d9;"><div style="left:0;top:0;width:96px;height:11px;background:#8ea4b3;border-bottom:1px solid #3b4954;"></div><div style="left:0;top:12px;width:96px;height:12.3px;background:#8fb0a5;border-bottom:1px solid #3b4954;"></div><div style="left:0;top:44.2px;width:96px;height:1px;background:#3b4954;"></div><div style="left:0;top:57.2px;width:96px;height:1px;background:#3b4954;"></div></div></div>
<span class="t" style="left:243.5px;top:358.00px;font-size:8px;line-height:12px;color:#0c0c0c;font-weight:bold;transform:scaleX(0.9003);transform-origin:0 50%;">BindSourceTableContacts</span>
<span class="t" style="left:243px;top:369.00px;font-size:8px;line-height:12px;color:#1a2a2a;transform:scaleX(0.9071);transform-origin:0 50%;">FDTableTableContacts</span>
<span class="t" style="left:243px;top:385.00px;font-size:7px;line-height:11px;color:#111;">*</span>
<span class="t" style="left:243px;top:403.00px;font-size:8px;line-height:12px;color:#111;transform:scaleX(0.8573);transform-origin:0 50%;">NOM</span>
<div style="left:243px;top:414px;width:40px;height:7px;overflow:hidden;"><span class="t" style="left:0;top:0.5px;font-size:8px;line-height:12px;color:#111;transform:scaleX(0.93);transform-origin:0 0;">PRENOM</span></div>
<svg style="left:176px;top:302px" width="455" height="119" viewBox="0 0 455 119"><g fill="none" stroke="#fff" stroke-width="2.6" opacity="0.9"><path d="M58.5 24.5 V95.5"/><path d="M167 83.5 H195.7 V19.7 H231"/></g><g fill="none" stroke="#15156e" stroke-width="1"><path d="M54 24.5 H58.5 V95.5 H60"/><path d="M167 83.5 H195.7 V19.7 H231"/></g><path d="M53.8 24.5 L59.5 21.5 V27.5z" fill="#15156e"/><path d="M64.6 95.5 L58 92.3 V98.7z" fill="#15156e"/><path d="M160.6 83.5 L167.5 80.3 V86.7z" fill="#15156e"/></svg>
<div style="left:621px;top:312px;width:8.5px;height:64px;background:#c9c9c9;"></div>
<svg class="flip" style="left:622.5px;top:305px" width="5.5" height="4" viewBox="0 0 5.5 4"><path d="M0.5 0.5 L2.75 3.2 L5.0 0.5" stroke="#333" stroke-width="1.3" fill="none"/></svg>
<svg style="left:622.5px;top:404.5px" width="5.5" height="4" viewBox="0 0 5.5 4"><path d="M0.5 0.5 L2.75 3.2 L5.0 0.5" stroke="#333" stroke-width="1.3" fill="none"/></svg>
<span class="t" style="left:638px;top:58.00px;font-size:11px;line-height:15px;color:#1e1e1e;transform:scaleX(0.8224);transform-origin:0 50%;">Project1.dproj - Projets</span>
<svg style="left:771.5px;top:61.3px" width="5" height="7" viewBox="0 0 5 7"><path d="M1.2 0.5h2.6M0.5 3.6h4M2.5 3.6v3" stroke="#333" stroke-width="0.8" fill="none"/><rect x="1.2" y="0.5" width="2.6" height="3.1" fill="#333"/></svg>
<svg style="left:782.5px;top:61.5px" width="6" height="6" viewBox="0 0 6 6"><path d="M0.3 0.3 L5.7 5.7 M5.7 0.3 L0.3 5.7" stroke="#333" stroke-width="0.8"/></svg>
<div style="left:636px;top:73px;width:160px;height:15px;background:#e9f0f9;"></div>
<svg style="left:641px;top:75.5px" width="11" height="10" viewBox="0 0 11 10"><rect x="0.6" y="0.8" width="9" height="7.8" fill="#f4f7fa" stroke="#55718c" stroke-width="0.85"/><rect x="0.6" y="0.8" width="9" height="1.7" fill="#55718c"/><path d="M2.3 4.6h3.2M2.3 6.3h3.2" stroke="#55718c" stroke-width="0.7"/><circle cx="8.2" cy="7.6" r="2.2" fill="#d8453b"/></svg>
<svg style="left:657px;top:78.5px" width="5.5" height="4" viewBox="0 0 5.5 4"><path d="M0.5 0.5 L2.75 3.2 L5.0 0.5" stroke="#666" stroke-width="0.9" fill="none"/></svg>
<svg style="left:667px;top:75.5px" width="11" height="10" viewBox="0 0 11 10"><rect x="0.6" y="0.8" width="9" height="7.8" fill="#f4f7fa" stroke="#55718c" stroke-width="0.85"/><rect x="0.6" y="0.8" width="9" height="1.7" fill="#55718c"/><path d="M2.3 4.6h3.2M2.3 6.3h3.2" stroke="#55718c" stroke-width="0.7"/><path d="M6 7.8h4M8 5.8v4" stroke="#3a9a60" stroke-width="1.2"/></svg>
<svg style="left:683px;top:75.5px" width="11" height="10" viewBox="0 0 11 10"><rect x="0.6" y="0.8" width="9" height="7.8" fill="#f4f7fa" stroke="#55718c" stroke-width="0.85"/><rect x="0.6" y="0.8" width="9" height="1.7" fill="#55718c"/><path d="M2.3 4.6h3.2M2.3 6.3h3.2" stroke="#55718c" stroke-width="0.7"/><path d="M6.3 5h2.4M6.3 6.6h2.4" stroke="#44607a" stroke-width="0.7"/></svg>
<svg style="left:698.5px;top:75.5px" width="10" height="10" viewBox="0 0 10 10"><path d="M8.3 5.2a3.5 3.5 0 1 1-1.2-2.8" fill="none" stroke="#2f9560" stroke-width="1.3"/><path d="M5.8 0.6h3v3z" fill="#2f9560"/></svg>
<svg style="left:712px;top:75.5px" width="11" height="10" viewBox="0 0 11 10"><rect x="2.5" y="0.6" width="6.5" height="5" fill="#f4f7fa" stroke="#44607a" stroke-width="0.8"/><rect x="0.6" y="4.6" width="9.4" height="5" fill="#f4f7fa" stroke="#44607a" stroke-width="0.8"/><path d="M5.3 2v2.2M4.2 3l1.1-1.2L6.4 3" stroke="#2a6fb0" stroke-width="0.8" fill="none"/></svg>
<svg style="left:726px;top:75.5px" width="11" height="10" viewBox="0 0 11 10"><rect x="0.6" y="0.8" width="9" height="7.8" fill="#f4f7fa" stroke="#44607a" stroke-width="0.9"/><rect x="0.6" y="0.8" width="9" height="1.8" fill="#44607a"/><circle cx="5" cy="5.6" r="1.9" fill="none" stroke="#44607a" stroke-width="0.8"/><path d="M6.5 8.6l1.2 1.2 2-2.6" stroke="#3a9a60" stroke-width="1" fill="none"/></svg>
<svg style="left:738.5px;top:78.5px" width="5.5" height="4" viewBox="0 0 5.5 4"><path d="M0.5 0.5 L2.75 3.2 L5.0 0.5" stroke="#666" stroke-width="0.9" fill="none"/></svg>
<svg style="left:749px;top:75.5px" width="10" height="10" viewBox="0 0 10 10"><circle cx="5" cy="5" r="3.9" fill="none" stroke="#d8453b" stroke-width="1.5"/><path d="M5 1.1a3.9 3.9 0 0 1 3.9 3.9" fill="none" stroke="#2a6fb0" stroke-width="1.5"/><path d="M1.1 5a3.9 3.9 0 0 0 2 3.4" fill="none" stroke="#3a9a60" stroke-width="1.5"/><circle cx="5" cy="5" r="1.1" fill="#44607a"/></svg>
<svg style="left:762px;top:78.5px" width="5.5" height="4" viewBox="0 0 5.5 4"><path d="M0.5 0.5 L2.75 3.2 L5.0 0.5" stroke="#666" stroke-width="0.9" fill="none"/></svg>
<div style="left:772.0px;top:79.6px;width:2.2px;height:2.2px;background:#2a6fb0;border-radius:1.1px;"></div>
<div style="left:775.7px;top:79.6px;width:2.2px;height:2.2px;background:#2a6fb0;border-radius:1.1px;"></div>
<div style="left:779.4px;top:79.6px;width:2.2px;height:2.2px;background:#2a6fb0;border-radius:1.1px;"></div>
<svg style="left:785.5px;top:78.5px" width="5.5" height="4" viewBox="0 0 5.5 4"><path d="M0.5 0.5 L2.75 3.2 L5.0 0.5" stroke="#666" stroke-width="0.9" fill="none"/></svg>
<div style="left:635.5px;top:88px;width:160px;height:129px;background:#fff;"></div>
<svg style="left:636px;top:89.5px" width="10" height="10" viewBox="0 0 10 10"><rect x="2.4" y="0.6" width="6.8" height="5.6" fill="#eaf1f8" stroke="#44607a" stroke-width="0.8"/><rect x="0.6" y="2.6" width="6.8" height="6.6" fill="#fff" stroke="#2a6fb0" stroke-width="0.8"/><rect x="0.6" y="2.6" width="6.8" height="1.8" fill="#2a6fb0"/><path d="M2.2 4.4v4.8M4 4.4v4.8M5.8 4.4v4.8" stroke="#2a6fb0" stroke-width="0.7"/></svg>
<span class="t" style="left:648.5px;top:89.00px;font-size:8px;line-height:12px;color:#111;transform:scaleX(0.8531);transform-origin:0 50%;">ProjectGroup1</span>
<svg style="left:637px;top:105px" width="6.5" height="4" viewBox="0 0 6.5 4"><path d="M0.5 0.5 L3.25 3.2 L6.0 0.5" stroke="#555" stroke-width="0.9" fill="none"/></svg>
<svg style="left:646px;top:101.5px" width="10" height="10" viewBox="0 0 10 10"><rect x="0.6" y="0.8" width="8.4" height="8" fill="#f4f7fa" stroke="#44607a" stroke-width="0.9"/><path d="M2.5 2.8v4.2M4.8 3v1M4.8 5.6v1M7 2.8v4.2" stroke="#2a6fb0" stroke-width="0.9"/></svg>
<span class="t" style="left:657.5px;top:101.00px;font-size:8px;line-height:12px;color:#111;font-weight:bold;transform:scaleX(0.8804);transform-origin:0 50%;">Project1.exe</span>
<svg style="left:648px;top:114.7px" width="5" height="7" viewBox="0 0 5 7"><path d="M0.7 0.5 L4 3.5 L0.7 6.5" stroke="#555" stroke-width="0.9" fill="none"/></svg>
<svg style="left:655px;top:113px" width="11" height="10" viewBox="0 0 11 10"><circle cx="2.6" cy="2.6" r="1.7" fill="none" stroke="#2a6fb0" stroke-width="1.2"/><circle cx="6.8" cy="6.3" r="2.2" fill="none" stroke="#555" stroke-width="1.2"/><path d="M6.8 3v6.6M3.5 6.3h6.6M4.5 4l4.6 4.6M9.1 4l-4.6 4.6" stroke="#555" stroke-width="0.7"/><circle cx="6.8" cy="6.3" r="1.1" fill="#fff"/></svg>
<span class="t" style="left:667px;top:113.00px;font-size:8px;line-height:12px;color:#111;transform:scaleX(0.8874);transform-origin:0 50%;">Configurations de construction (Debug)</span>
<svg style="left:648px;top:126.30000000000001px" width="5" height="7" viewBox="0 0 5 7"><path d="M0.7 0.5 L4 3.5 L0.7 6.5" stroke="#555" stroke-width="0.9" fill="none"/></svg>
<svg style="left:655px;top:125px" width="10" height="10" viewBox="0 0 10 10"><circle cx="4.8" cy="4.8" r="3.7" fill="none" stroke="#d8453b" stroke-width="1.3"/><path d="M4.8 1.1a3.7 3.7 0 0 1 3.7 3.7" fill="none" stroke="#44607a" stroke-width="1.3"/><path d="M1.1 4.8a3.7 3.7 0 0 0 1.7 3.1" fill="none" stroke="#3a9a60" stroke-width="1.3"/></svg>
<span class="t" style="left:667px;top:124.00px;font-size:8px;line-height:12px;color:#111;transform:scaleX(0.8669);transform-origin:0 50%;">Plates-formes cible (Windows 32 bits)</span>
<svg style="left:648px;top:137.9px" width="5" height="7" viewBox="0 0 5 7"><path d="M0.7 0.5 L4 3.5 L0.7 6.5" stroke="#555" stroke-width="0.9" fill="none"/></svg>
<svg style="left:655px;top:136.5px" width="9" height="10" viewBox="0 0 9 10"><path d="M0.6 0.6h5l2.4 2.4v6.4h-7.4z" fill="#fff" stroke="#666" stroke-width="0.8"/><path d="M2 3.2h3.5M2 4.8h2" stroke="#888" stroke-width="0.6"/><rect x="1.8" y="6" width="4.4" height="3.4" fill="#f0f0f0" stroke="#666" stroke-width="0.6"/></svg>
<span class="t" style="left:667px;top:136.00px;font-size:8px;line-height:12px;color:#111;transform:scaleX(0.8433);transform-origin:0 50%;">Unit1.pas</span>
<div style="left:635.5px;top:217px;width:160px;height:45px;background:#e3ecf7;"></div>
<span class="t" style="left:640px;top:219.00px;font-size:8px;line-height:12px;color:#111;transform:scaleX(0.8701);transform-origin:0 50%;">Audit de code : Terminé</span>
<div style="left:635.5px;top:245.5px;width:41.5px;height:14px;background:#fff;"></div>
<span class="t" style="left:640px;top:247.00px;font-size:8px;line-height:12px;color:#2a6496;font-weight:bold;transform:scaleX(0.8369);transform-origin:0 50%;">Project1...</span>
<span class="t" style="left:680px;top:247.00px;font-size:8px;line-height:12px;color:#111;transform:scaleX(0.8692);transform-origin:0 50%;">Vue Mo...</span>
<div style="left:715px;top:247px;width:1px;height:10px;background:#9aa7b5;"></div>
<span class="t" style="left:719px;top:247.00px;font-size:8px;line-height:12px;color:#111;transform:scaleX(0.8330);transform-origin:0 50%;">Explorat...</span>
<div style="left:755px;top:247px;width:1px;height:10px;background:#9aa7b5;"></div>
<span class="t" style="left:758.5px;top:247.00px;font-size:8px;line-height:12px;color:#111;transform:scaleX(0.8617);transform-origin:0 50%;">Aperçu ...</span>
<span class="t" style="left:638px;top:269.00px;font-size:11px;line-height:15px;color:#1e1e1e;transform:scaleX(0.7592);transform-origin:0 50%;">Palette</span>
<svg style="left:771.5px;top:271.8px" width="5" height="7" viewBox="0 0 5 7"><path d="M1.2 0.5h2.6M0.5 3.6h4M2.5 3.6v3" stroke="#333" stroke-width="0.8" fill="none"/><rect x="1.2" y="0.5" width="2.6" height="3.1" fill="#333"/></svg>
<svg style="left:782px;top:272px" width="6" height="6" viewBox="0 0 6 6"><path d="M0.3 0.3 L5.7 5.7 M5.7 0.3 L0.3 5.7" stroke="#333" stroke-width="0.8"/></svg>
<div style="left:636px;top:283.5px;width:160px;height:15px;background:#e9f0f9;"></div>
<svg style="left:639px;top:286px" width="10" height="11" viewBox="0 0 10 11"><path d="M0.7 0.7h4.6l2.6 2.6v6.4h-7.2z" fill="#fff" stroke="#555" stroke-width="0.8"/><path d="M5.3 0.7v2.6h2.6" fill="none" stroke="#555" stroke-width="0.7"/><path d="M4.6 5.6l4.2 2.6-1.8.3 1 1.8-.8.4-1-1.8-1.2 1.2z" fill="#8a3fa0"/></svg>
<svg style="left:652px;top:288.5px" width="5.5" height="4" viewBox="0 0 5.5 4"><path d="M0.5 0.5 L2.75 3.2 L5.0 0.5" stroke="#666" stroke-width="0.9" fill="none"/></svg>
<div style="left:659.5px;top:283.5px;width:13.5px;height:15px;background:#c3d7ed;"></div>
<svg style="left:661.5px;top:286px" width="10" height="10" viewBox="0 0 10 10"><path d="M0.8 0.8 L9 4.2 L5.6 5.6 L8.4 8.6 L7.4 9.4 L4.6 6.4 L2.8 9z" fill="#8a3fa0"/></svg>
<div style="left:685px;top:284.5px;width:95px;height:13px;background:#f3f7fc;"></div>
<svg style="left:781.5px;top:285.5px" width="11" height="11" viewBox="0 0 11 11"><circle cx="6.3" cy="4.2" r="3" stroke="#1c64a6" stroke-width="1.1" fill="none"/><path d="M4 6.5 L1.2 9.6" stroke="#1c64a6" stroke-width="1.3"/></svg>
<div style="left:635.5px;top:298.5px;width:160px;height:122.7px;background:#fff;"></div>
<svg style="left:647.5px;top:298.5px" width="9" height="8" viewBox="0 0 9 8"><rect x="0.5" y="0.5" width="8" height="7" fill="#9aa4ae"/><path d="M2.5 0.5v7M4.5 0.5v7M6.5 0.5v7" stroke="#5a6672" stroke-width="0.7"/></svg>
<span class="t" style="left:659px;top:298.00px;font-size:8px;line-height:12px;color:#222;transform:scaleX(0.7750);transform-origin:0 50%;">TGrid</span>
<svg style="left:647.5px;top:311px" width="10" height="9" viewBox="0 0 10 9"><rect x="0.5" y="0.5" width="7" height="6.5" fill="#c8d0d8" stroke="#5a6672" stroke-width="0.7"/><path d="M0.5 2.6h7M3 0.5v6.5M5.3 0.5v6.5" stroke="#5a6672" stroke-width="0.6"/><circle cx="7.2" cy="6.6" r="2.2" fill="#2f9560"/><circle cx="7.2" cy="6.6" r="0.8" fill="#fff"/></svg>
<span class="t" style="left:659px;top:310.00px;font-size:8px;line-height:12px;color:#222;transform:scaleX(0.8314);transform-origin:0 50%;">TStringGrid</span>
<svg style="left:647.5px;top:326px" width="9" height="5" viewBox="0 0 9 5"><rect x="0.3" y="0.5" width="8" height="3.6" fill="#d8c8c8" stroke="#9a8a8a" stroke-width="0.6"/><path d="M3 0.5v3.6M5.6 0.5v3.6" stroke="#9a8a8a" stroke-width="0.6"/></svg>
<span class="t" style="left:659px;top:323.00px;font-size:8px;line-height:12px;color:#222;transform:scaleX(0.8354);transform-origin:0 50%;">THeader</span>
<svg style="left:640.5px;top:338.3px" width="5" height="7" viewBox="0 0 5 7"><path d="M0.7 0.5 L4 3.5 L0.7 6.5" stroke="#555" stroke-width="0.9" fill="none"/></svg>
<span class="t" style="left:649.5px;top:336.00px;font-size:8px;line-height:12px;color:#222;transform:scaleX(0.8927);transform-origin:0 50%;">Contrôles communs</span>
<svg style="left:640.5px;top:349.8px" width="5" height="7" viewBox="0 0 5 7"><path d="M0.7 0.5 L4 3.5 L0.7 6.5" stroke="#555" stroke-width="0.9" fill="none"/></svg>
<span class="t" style="left:649.5px;top:348.00px;font-size:8px;line-height:12px;color:#222;transform:scaleX(0.8971);transform-origin:0 50%;">Animations</span>
<svg style="left:640.5px;top:361.8px" width="5" height="7" viewBox="0 0 5 7"><path d="M0.7 0.5 L4 3.5 L0.7 6.5" stroke="#555" stroke-width="0.9" fill="none"/></svg>
<span class="t" style="left:649.5px;top:360.00px;font-size:8px;line-height:12px;color:#222;transform:scaleX(0.8590);transform-origin:0 50%;">Couleurs</span>
<svg style="left:640.5px;top:373.3px" width="5" height="7" viewBox="0 0 5 7"><path d="M0.7 0.5 L4 3.5 L0.7 6.5" stroke="#555" stroke-width="0.9" fill="none"/></svg>
<span class="t" style="left:649.5px;top:371.00px;font-size:8px;line-height:12px;color:#222;transform:scaleX(0.8371);transform-origin:0 50%;">Effets</span>
<svg style="left:640.5px;top:385.3px" width="5" height="7" viewBox="0 0 5 7"><path d="M0.7 0.5 L4 3.5 L0.7 6.5" stroke="#555" stroke-width="0.9" fill="none"/></svg>
<span class="t" style="left:649.5px;top:383.00px;font-size:8px;line-height:12px;color:#222;transform:scaleX(0.8670);transform-origin:0 50%;">Fenêtres d'affichage</span>
<svg style="left:640.5px;top:396.8px" width="5" height="7" viewBox="0 0 5 7"><path d="M0.7 0.5 L4 3.5 L0.7 6.5" stroke="#555" stroke-width="0.9" fill="none"/></svg>
<span class="t" style="left:649.5px;top:395.00px;font-size:8px;line-height:12px;color:#222;transform:scaleX(0.8299);transform-origin:0 50%;">Formes</span>
<svg style="left:640.5px;top:408.3px" width="5" height="7" viewBox="0 0 5 7"><path d="M0.7 0.5 L4 3.5 L0.7 6.5" stroke="#555" stroke-width="0.9" fill="none"/></svg>
<span class="t" style="left:649.5px;top:406.00px;font-size:8px;line-height:12px;color:#222;transform:scaleX(0.7970);transform-origin:0 50%;">Scène 3D</span>
<div style="left:640px;top:419.5px;width:60px;height:2.5px;overflow:hidden;"><span class="t" style="left:9.5px;top:-0.5px;font-size:8px;line-height:10px;color:#444;">Formes 3D</span><svg style="left:0.5px;top:1px" width="5" height="7" viewBox="0 0 5 7"><path d="M0.7 0.5 L4 3.5 L0.7 6.5" stroke="#555" stroke-width="0.9" fill="none"/></svg></div>
<div style="left:786.5px;top:359px;width:7.5px;height:18.5px;background:#c7d7ea;"></div>
<svg class="flip" style="left:787.5px;top:302.5px" width="6.5" height="4" viewBox="0 0 6.5 4"><path d="M0.5 0.5 L3.25 3.2 L6.0 0.5" stroke="#666" stroke-width="0.9" fill="none"/></svg>
<svg style="left:787.5px;top:414.5px" width="6.5" height="4" viewBox="0 0 6.5 4"><path d="M0.5 0.5 L3.25 3.2 L6.0 0.5" stroke="#666" stroke-width="0.9" fill="none"/></svg>
<div style="left:0px;top:425px;width:800px;height:1px;background:#e2ecf8;"></div>
<div style="left:0px;top:426px;width:800px;height:24px;background:#1d2f41;"></div>
<div style="left:0px;top:426px;width:800px;height:1px;background:#12202f;"></div>
<div style="left:0px;top:426px;width:29.5px;height:24px;background:#1f3b48;"></div>
<svg style="left:9px;top:433px" width="10.5" height="10.5" viewBox="0 0 10.5 10.5"><path d="M0 1.5 L4.3 0.9 V5 H0z M5.1 0.8 L10.5 0 V5 H5.1z M0 5.8 H4.3 V9.9 L0 9.3z M5.1 5.8 H10.5 V10.8 L5.1 10z" fill="#fff"/></svg>
<div style="left:796.5px;top:427px;width:0.6px;height:23px;background:#5a6a78;"></div>
</div></body></html>
